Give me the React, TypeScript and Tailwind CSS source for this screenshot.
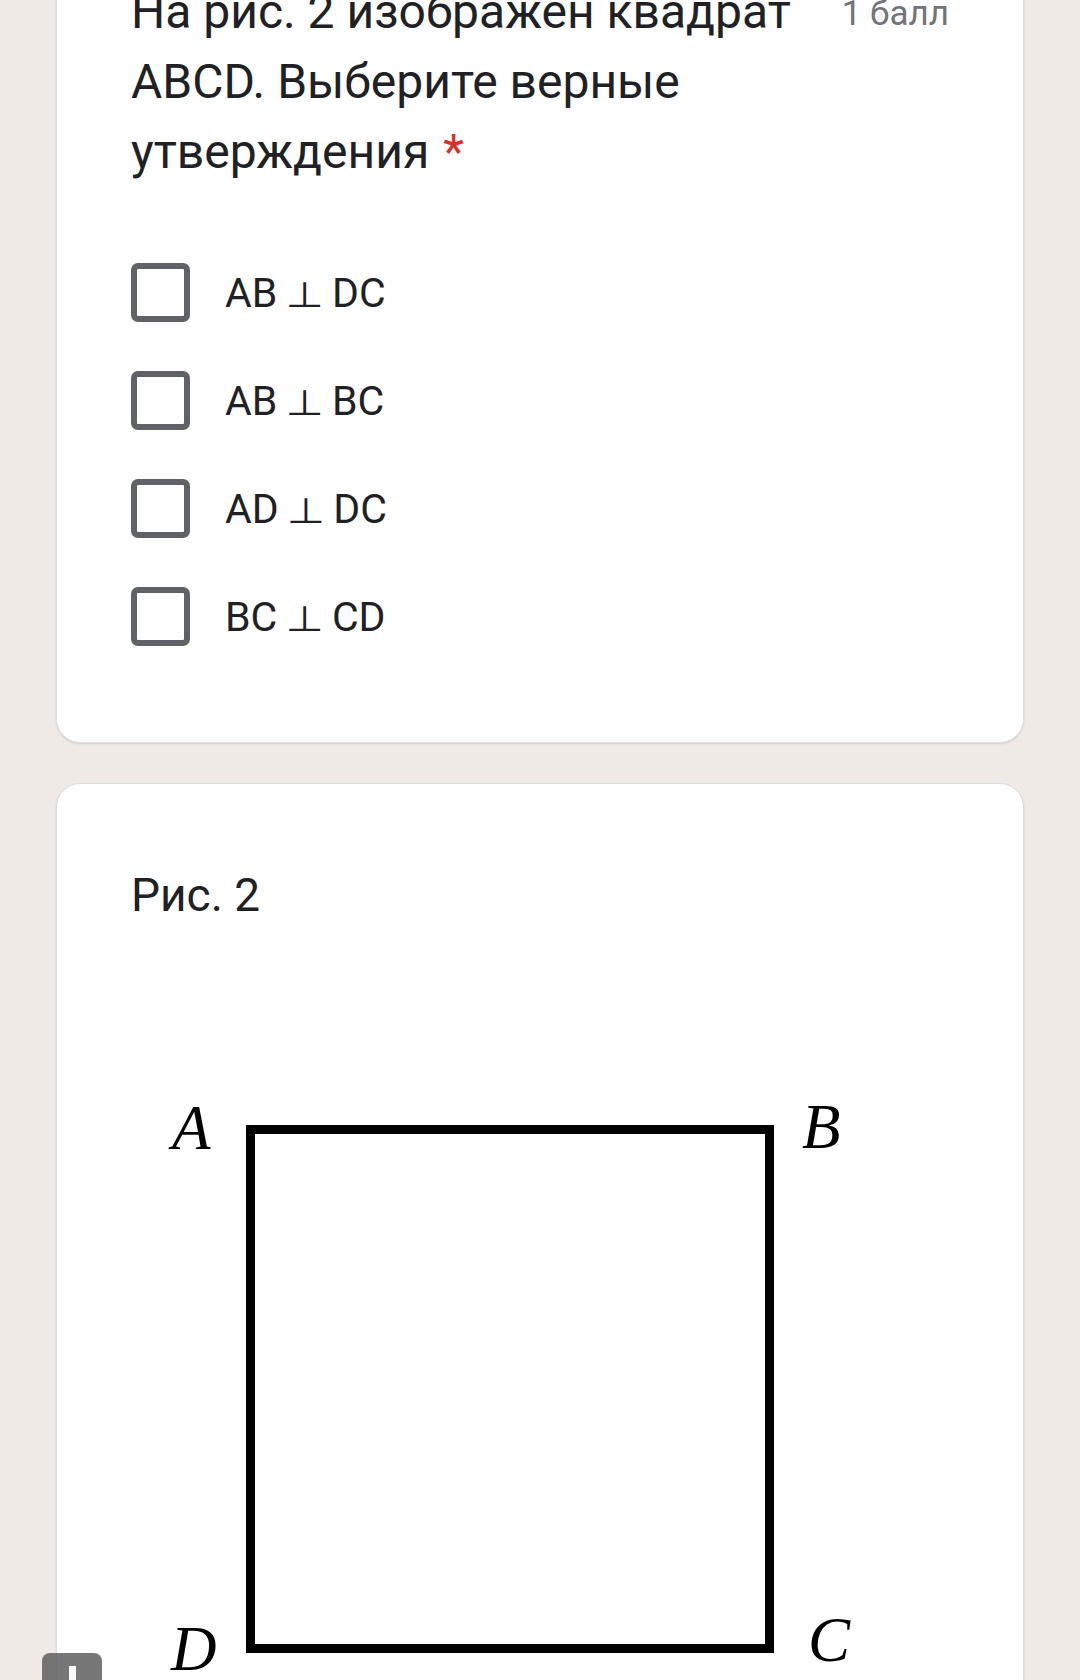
import React from "react";

const options = ["AB|DC", "AB|BC", "AD|DC", "BC|CD"];

const Perp = () => (
  <span className="mx-[-2px] inline-block origin-[50%_85%] scale-y-[0.8] font-['DejaVu_Sans',sans-serif] text-[44px] leading-none">
    ⊥
  </span>
);

const CheckRow = ({ label }: { label: string }) => {
  const [left, right] = label.split("|");
  return (
    <div className="flex h-[108px] items-center">
      <div className="h-[59px] w-[59px] shrink-0 rounded-[7px] border-[6px] border-[#5f6368] bg-white" />
      <div className="ml-[35px] text-[41px] leading-none text-[#202124]">
        {left} <Perp /> {right}
      </div>
    </div>
  );
};

const Figure = () => (
  <svg width="760" height="640" viewBox="0 0 760 640" className="block">
    <rect
      x="119.5"
      y="68.5"
      width="519"
      height="519"
      fill="none"
      stroke="#000"
      strokeWidth="9"
    />
    <g
      fontFamily="'Liberation Serif', 'Times New Roman', serif"
      fontStyle="italic"
      fontSize="63"
      fill="#000"
    >
      <text x="41" y="88">A</text>
      <text x="671" y="87">B</text>
      <text x="677" y="600">C</text>
      <text x="40" y="609">D</text>
    </g>
  </svg>
);

export default function App() {
  return (
    <div className="relative h-[1680px] w-[1080px] overflow-hidden bg-[#f0ebe6] px-[56px] font-[Roboto,'Noto_Sans',sans-serif]">
      {/* question card */}
      <div className="mt-[-72px] rounded-[24px] border border-[#dadce0] bg-white px-[74px] pb-[72px] pt-[48px] shadow-[0_1px_2px_rgba(0,0,0,0.12)]">
        <div className="flex items-start">
          <div className="flex-1 text-[48px] leading-[70px] text-[#202124]">
            На рис. 2 изображен квадрат ABCD. Выберите верные утверждения
            <span className="ml-[14px] text-[#d93025]">*</span>
          </div>
          <div className="ml-[24px] mt-[2px] shrink-0 text-[35px] leading-[70px] text-[#70757a]">
            1 балл
          </div>
        </div>
        <div className="mt-[51px]">
          {options.map((o) => (
            <CheckRow key={o} label={o} />
          ))}
        </div>
      </div>

      {/* image card */}
      <div className="mt-[40px] rounded-[24px] border border-[#dadce0] bg-white px-[74px] pb-[80px] pt-[83px] shadow-[0_1px_2px_rgba(0,0,0,0.12)]">
        <div className="text-[46px] leading-[56px] text-[#202124]">Рис. 2</div>
        <div className="mt-[138px]">
          <Figure />
        </div>
      </div>

      {/* floating button, cut by the screen edge */}
      <div className="absolute left-[42px] top-[1653px] h-[44px] w-[60px] rounded-[8px] bg-[#5f5f5f]/85">
        <div className="absolute left-[27px] top-[13px] h-[24px] w-[7px] bg-[#fafafa]" />
      </div>
    </div>
  );
}
